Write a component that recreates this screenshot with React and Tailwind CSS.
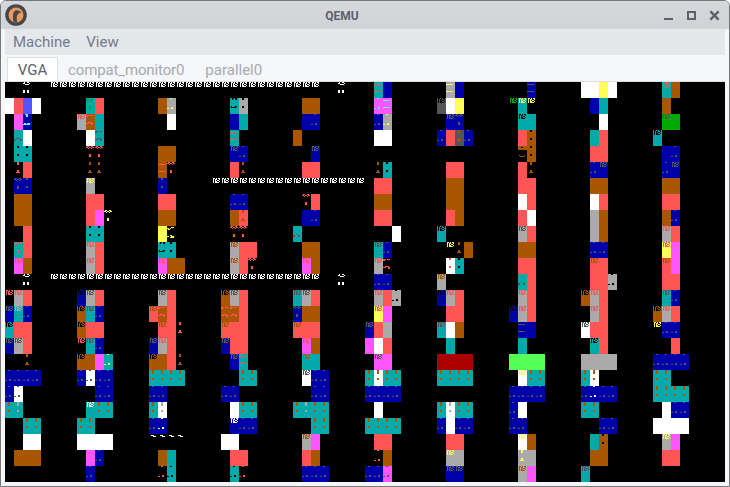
const COLORS = {
  k: '#000000', b: '#0000aa', g: '#00aa00', c: '#00aaaa', r: '#aa0000',
  n: '#aa5500', l: '#aaaaaa', d: '#555555', B: '#5555ff', G: '#55ff55',
  C: '#55ffff', R: '#ff5555', M: '#ff55ff', Y: '#ffff55', w: '#ffffff',
}

// Character bitmaps: scan line -> pixels that are lit.
const GLYPHS = {
  a: { 0: '.##.#.##.', 1: '.#.##..#.', 2: '.#.#.##..', 3: '.#.##..#.', 4: '.#.####..' },
  b: { 0: '...##....', 9: '....##...', 10: '##..##...' },
  c: { 0: '.##..##..', 1: '##.##.##.', 2: '..#..#...', 8: '...##....', 9: '...##....', 10: '...##....' },
  d: { 0: '...##....', 1: '...##....', 2: '...##....', 8: '...##....', 9: '...##....', 10: '..####...' },
  e: { 0: '...##....', 1: '...##....', 8: '...##....', 9: '...##....' },
  f: { 0: '...##....', 1: '...##....', 2: '...##....', 3: '...##....', 8: '...##....', 9: '...##....' },
  g: { 2: '#######..', 9: '#######..' },
  h: { 8: '..####...', 9: '##....##.', 10: '#.....##.' },
  i: { 1: '###.###..', 2: '##.......', 8: '..####...', 9: '###..##..', 10: '.....##..' },
  j: { 8: '...#.....', 9: '##...##..', 10: '##...##..' },
  k: { 0: '..##.##..', 1: '..#..##..', 8: '.#...##..', 9: '.#####...' },
  m: { 0: '..###....', 1: '...##....', 2: '...##....', 9: '.##.###..', 10: '#######..' },
  n: { 1: '..###....', 2: '....###..' },
  o: { 1: '.##..##..', 2: '##.###...', 8: '...##....', 9: '...##....', 10: '...##....' },
  p: { 1: '....###..', 2: '##.#.....', 3: '.##......', 9: '...##....', 10: '##..###..', 11: '...####..' },
  q: { 0: '#########', 1: '###..####', 2: '#########', 3: '#########', 9: '.#....#..', 10: '..####...' },
  W: { 0: '.#..##...', 1: '##....#..', 2: '..####...', 8: '##..##...', 9: '##..##...', 10: '##..##...' },
}

// Ten blocks of four cells each, 25 text rows. A cell is "background" or
// "background + foreground + glyph"; "_" is empty.
const BLOCKS = [
  `_ _ kwW _|w R B w|_ M bCm _|_ cdh w _|_ cke cke _|_ kRd R _|_ bdc bde _|_ n n _|_ n n _|_ _ R _|_ cRc R _|_ MRa n _|_ _ kwW _|kRa lRa R _|bda cla bdb _|cka R R _|bda lda R _|_ _ knd _|bdb bdb bdb bdb|bdb wdb _ _|cnf clf _ _|_ _ cnf cnf|_ _ w w|_ n n n|_ _ _ _`,
  `_ _ _ _|_ cgo R _|lRa nRi c _|_ w cdi _|_ kRc kRc _|_ knd knd _|_ lYa _ _|_ R R _|_ R M kYc|_ cke cke _|_ lRa R _|_ lRa R _|_ _ _ _|bka lda R _|nka cda bdb _|nka R R _|kRa cda bdb _|nka n M cYb|bdb wdb bdb bdb|_ _ bdb bdb|_ cwa cnf cnf|cnf cnf _ _|w w w w|_ M bdb _|_ bdb _ _`,
  `_ _ _ _|_ n lYb _|_ _ w _|_ _ _ _|_ n n _|_ nRg kRc _|_ bde _ _|_ R R _|_ n n _|_ Y kYp _|_ ckk cke _|_ MRa n n|_ _ _ _|_ lda R _|Rna nRi R _|_ Rna R kRd|bda lRa R _|nka n R knd|cnf cnf cnf cnf|bdb bdb _ _|cnf wlf _ _|bdb bwb _ _|kwn kwn kwn kwn|_ n c _|_ kRb ckb _`,
  `_ _ _ _|_ ckk lke _|_ b c _|_ cRg _ _|_ bda bdb _|_ R knd _|_ _ _ _|_ bdb bdb _|_ n Rnd _|_ kRc kRc _|_ lna R R|_ lna R kRc|_ _ _ _|nka lda R _|nRi nRi R _|Rna R R _|bda R R _|_ bda cRg _|_ _ cnf cnf|bdb bdb _ _|_ w cnf cnf|_ bwa bdb bdb|w w _ _|_ R R _|_ ckb kRb _`,
  `_ _ _ _|_ n n _|_ b bdb _|n _ _ _|_ _ bda _|_ R R _|_ _ _ _|_ kRc R _|_ b bdb _|cdj _ _ _|_ n n _|_ MRa n _|_ _ _ _|cda lda R _|bdc n n _|Rna R R _|_ MRa n _|_ cna c _|_ wda bdb bdb|_ _ bdb bdb|cnf clf cnf cnf|_ _ cnf cnf|_ lna M _|_ R n _|_ bdb bdb bdb`,
  `_ cRg b _|_ MCb MCg _|_ bdb lYb _|_ w w _|_ _ _ _|_ knd cke _|_ R R _|_ n n _|_ R R _|_ _ _ w|_ cda bdb _|_ lRa kRi _|_ bdb bdb _|_ lRa R lkb|_ YRa M _|bda R l _|M w R _|_ Mda M _|cnf wnf cnf cnf|bdb bdb bdb bdb|_ w _ _|cnf cnf cnf cnf|_ R R _|_ kRb n _|bdb bdb Mdb _`,
  `_ lYg b _|dka w Y _|_ bda bdc _|bdb R dnd bdb|_ _ _ _|_ R R _|_ n n _|_ n n _|_ R n _|cka _ _ _|_ kYa knd n|_ wRe cke _|lna _ _ _|bka lRa R _|_ R R _|cda w n _|_ c _ _|r r r r|cnf cnf cnf cnf|_ _ _ _|cnf wlf cnf cnf|bdb w bdb bdb|_ R R _|_ lYa l _|_ bda bda _`,
  `_ _ bdg _|kga cYa kYa _|_ cka c _|_ R nke _|_ knq nke _|_ R knd _|_ R R _|_ w R _|_ R w _|_ lda R _|_ n n _|_ R R _|_ cdj R _|_ lRa R _|bka lRa R _|_ bdg b _|_ c _ _|G G G G|_ wYa cnf cnf|bdb bdb bdb bdb|bdb w _ _|bdb bdb _ _|_ wYa n _|_ lYd l _|_ lna M _`,
  `w w Y w|_ b c _|_ _ w _|_ c R _|_ R R _|_ bdb bda _|_ n n _|_ w R _|_ l n _|_ l n _|_ bdb bdb _|_ Rna R _|_ R R lkb|nka lRa R _|_ lRa R _|wda R R _|_ cka R _|l l l l|cnf wnf _ _|bdb bwb bdb bdb|cnf cnf _ _|_ _ bdb bdb|_ c nke _|_ n n _|cda _ _ _`,
  `_ cRa n _|_ n _ _|_ gda g _|cka _ _ _|_ b bdb _|_ bdb bda _|_ n n _|_ R R _|_ n bdb _|_ lRa R _|_ YRa M _|_ Rna M _|_ R R _|_ cda bdb _|nka lRa R _|kYa bdb bdb _|_ _ R _|bdb bdb bdb bdb|cnf cnf _ _|cnf cnf cnf cnf|_ w bdb bdb|w w w w|_ lYa M _|_ R R _|_ _ _ _`,
].map((block) => block.split('|').map((row) => row.split(' ')))

// Horizontal rules made of one repeated character: row -> first and last column.
const RULES = { 0: [5, 34], 6: [23, 39], 12: [5, 34] }

function cellAt(row, col) {
  const rule = RULES[row]
  if (rule && col >= rule[0] && col <= rule[1]) return 'kwa'
  if ((row === 0 || row === 12) && col === 37) return 'kwW'
  const offset = col % 8
  return offset < 4 ? BLOCKS[(col - offset) / 8][row][offset] : '_'
}

const SCREEN = Array.from({ length: 25 }, (_, row) =>
  Array.from({ length: 80 }, (_, col) => cellAt(row, col)),
)

function glyphPath(name) {
  let d = ''
  for (const [y, bits] of Object.entries(GLYPHS[name])) {
    for (let x = 0; x < bits.length; x++) {
      if (bits[x] === '#') d += `M${x} ${y}h1v1h-1z`
    }
  }
  return d
}

function Cell({ code }) {
  return (
    <div className="h-4 w-[9px] shrink-0" style={{ backgroundColor: COLORS[code[0]] }}>
      {code.length === 3 && (
        <svg className="block h-4 w-[9px]" viewBox="0 0 9 16" shapeRendering="crispEdges">
          <path d={glyphPath(code[2])} fill={COLORS[code[1]]} />
        </svg>
      )}
    </div>
  )
}

function Display() {
  return (
    <div className="h-[400px] w-[720px] overflow-hidden bg-black">
      {SCREEN.map((row, y) => (
        <div key={y} className="flex h-4">
          {row.map((code, x) => (
            <Cell key={x} code={code} />
          ))}
        </div>
      ))}
    </div>
  )
}

function Logo() {
  return (
    <svg className="h-[22px] w-[22px]" viewBox="0 0 22 22">
      <circle cx="11" cy="11" r="10.8" fill="#45474a" />
      <circle cx="11" cy="11" r="7.5" fill="#f0985c" />
      <path d="M8.8 18.3C7.6 14.6 7.6 10.4 8.8 8.2 9.9 6 12.2 5.8 13.7 6.8c1 .6 2.2.8 2.7 1.7-1.2.6-2.4.6-3.1 1.2-1.7 1.4-2 4.6-1.1 8.6z" fill="#45474a" />
    </svg>
  )
}

function TitleBar() {
  return (
    <header className="flex h-7 items-center bg-gradient-to-b from-[#d6d7da] to-[#d0d4d6] pr-[9px] pl-1">
      <Logo />
      <h1 className="flex-1 pt-0.5 pr-[5px] text-center text-[12px] leading-4 font-bold text-[#5c616c]">QEMU</h1>
      <svg className="h-3 w-[58px]" viewBox="0 0 58 12" fill="none" stroke="#5c616c" strokeWidth="2">
        <path d="M2 10h9" />
        <path d="M26 3h7v7h-7z" />
        <path d="M49.2 3.2l6.6 6.6M55.8 3.2l-6.6 6.6" strokeWidth="2.4" strokeLinecap="square" />
      </svg>
    </header>
  )
}

export default function App() {
  return (
    <div className="h-[487px] w-[730px] overflow-hidden bg-white font-['Roboto',sans-serif] text-[15px]">
      <div className="h-full overflow-hidden rounded-t-[6px] border border-[#77787c] bg-[#f5f6f8]">
        <TitleBar />
        <div className="px-1">
          <nav className="flex h-[26px] items-center gap-4 bg-[#e6e7eb] pl-2 leading-5 text-[#727a8e]">
            <span>Machine</span>
            <span>View</span>
          </nav>
          <div className="flex h-[27px] items-end border-b border-[#dcdde5] pl-0.5 text-[#a7aab0]">
            <div className="flex h-6 w-[51px] items-center justify-center border border-b-0 border-[#dcdfe4] bg-white pt-px text-[#5c616c]">
              VGA
            </div>
            <div className="flex h-6 items-center pt-0.5 pl-[10px] tracking-[-0.13px]">compat_monitor0</div>
            <div className="flex h-6 items-center pt-0.5 pl-[21px]">parallel0</div>
          </div>
          <Display />
        </div>
      </div>
    </div>
  )
}
